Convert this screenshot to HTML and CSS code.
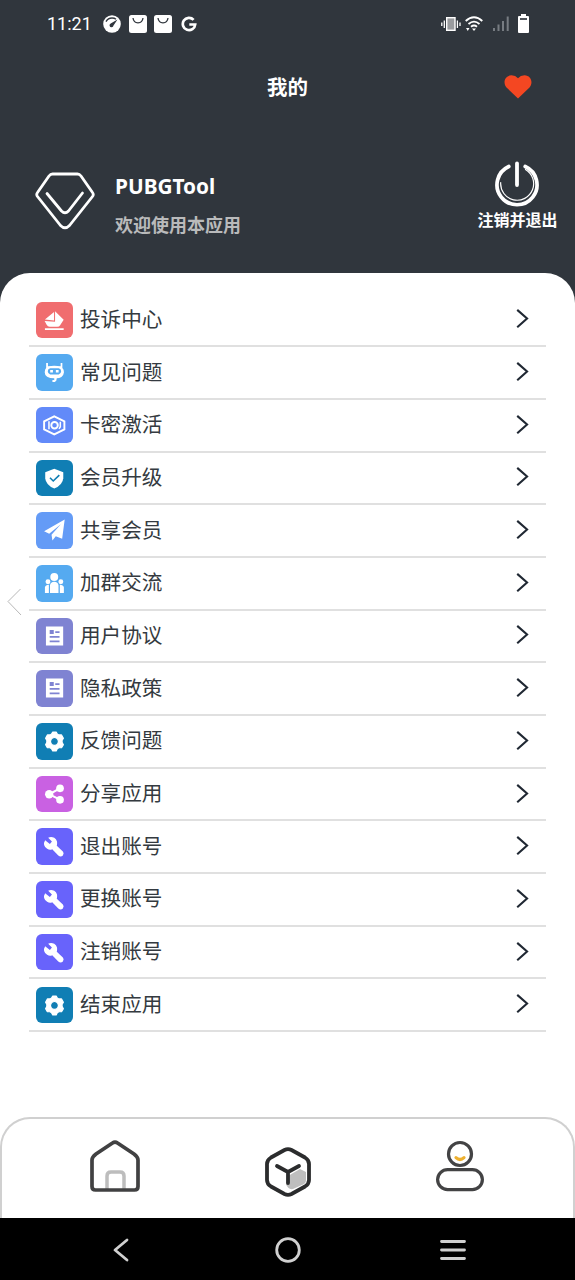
FILE: index.html
```html
<!DOCTYPE html>
<html lang="zh-CN">
<head>
<meta charset="utf-8">
<title>我的</title>
<link rel="stylesheet" href="styles.css">
</head>
<body>
<svg class="defs" width="0" height="0">
  <symbol id="boat" viewBox="0 0 36 36"><path fill="#fff" d="M18.800 9L27.300 17.500L23.800 23Q23 24.500 21 24.500H13.500Q11.500 24.500 10.500 22.500L8.500 18.700L18.800 19.500zM8.800 17.200L17.800 9.800V18.200zM8.800 26h18.500v1.700H8.800z"/></symbol>
  <symbol id="robot" viewBox="0 0 36 36"><path fill="#fff" fill-rule="evenodd" d="M10 8.800h1.800v3.400Q18 10.800 24.300 12.200V8.800H26v4.900q1.600 1.200 1.600 4.300q-.4 3.400-2.500 4.700Q23 24 20.500 24L20 26.500L18.500 27.500h-2.300v-1.900h1.800V24Q13.500 24 11 22.500Q8.600 21 8.600 18Q8.600 15 10 13.700zM14 14a3.200 3.200 0 0 0 0 6.200h8.400a3.200 3.200 0 0 0 0-6.200z"/><path d="M14 15.900h2.700v2.400H14zM19.600 15.900h2.700v2.400h-2.700z" fill="#fff"/></symbol>
  <symbol id="card" viewBox="0 0 36 36"><g fill="none" stroke="#fff"><path d="M8 14.200L18 9.200L28 14.200V22L18 27L8 22z" stroke-width="1.900"/><path d="M12.800 14v8M24 14.500v5l-1.300 2" stroke-width="1.500"/><circle cx="18.300" cy="18" r="3.200" stroke-width="1.900"/></g></symbol>
  <symbol id="shield" viewBox="0 0 36 36"><path fill="#fff" d="M18 8.700L26.900 12v6q-.5 6.500-8.900 10.200Q9.600 24.500 9.100 18v-6z"/><path class="cut" d="M13.800 17.500l3.200 3.200l6-5.700"/></symbol>
  <symbol id="plane" viewBox="0 0 36 36"><path fill="#fff" d="M28.300 7.500L25.800 26.500L19.500 24L16.200 28L15.300 22.500L24.500 12L13 21.500L8 19z"/></symbol>
  <symbol id="group" viewBox="0 0 36 36"><g fill="#fff"><circle cx="18" cy="11.800" r="3.900"/><circle cx="11.800" cy="16.500" r="2.400"/><circle cx="24.500" cy="16.500" r="2.400"/><path d="M13.800 27.500V20q.5-3.500 4.200-3.500t4.200 3.500v7.500zM8.800 27.500V22q.5-2.500 3.900-2.500v8zM27.500 27.500V22q-.5-2.500-4-2.500v8z"/></g></symbol>
  <symbol id="doc" viewBox="0 0 36 36"><path fill="#fff" fill-rule="evenodd" d="M9.800 8.500h17v18.500h-17zM13.500 11.900v3.800h4v-3.800zM19 13v1.700h4.200V13zM13.500 17.800v1.700h9.700v-1.700zM13.500 22.200V24h9.700v-1.800z"/></symbol>
  <symbol id="gear" viewBox="0 0 36 36"><path fill="#fff" stroke="#fff" stroke-width="1.200" stroke-linejoin="round" fill-rule="evenodd" d="M15.300 11L16.500 8.900h3.400L21 11l1.500.8h2.700l1.800 3.200l-1.300 2.300v1.800l1.300 2.300l-1.800 3h-2.700l-1.500 1l-1.100 2.100h-3.400l-1.200-2.100l-1.500-1h-2.600l-1.700-3l1.200-2.300v-1.800L9.500 15l1.700-3.200h2.600zM18.200 14.300a3.900 3.900 0 1 0 .01 0z"/></symbol>
  <symbol id="share" viewBox="0 0 36 36"><path d="M24 12L13 18L24 23.500" fill="none" stroke="#fff" stroke-width="2"/><g fill="#fff"><circle cx="13" cy="18" r="4.100"/><circle cx="23.700" cy="12.200" r="3.800"/><circle cx="23.700" cy="23.500" r="3.800"/></g></symbol>
  <symbol id="wrench" viewBox="0 0 36 36"><path fill="#fff" d="M12 9.500l3.700 3.900l-2 2.400L9 12Q6 17 11 20.500Q13.500 22.200 16 21L22 27.200Q24.500 29 26.500 27Q28 25 26.500 23.300L20.500 17.500Q22 12.500 18 9.700Q15 8 12 9.500z"/></symbol>
  <symbol id="chevron" viewBox="0 0 14 22"><path d="M2 2L12.300 11L2 20.200" fill="none" stroke="#202833" stroke-width="2.200"/></symbol>
  <symbol id="bag" viewBox="0 0 18 18"><rect width="18" height="18" rx="2.500" fill="#fff"/><path d="M4 3q.6 4.800 5 4.800t5-4.800" fill="none" stroke="#30363d" stroke-width="1.300"/></symbol>
</svg>
<div class="screen">
  <header class="top">
    <div class="status">
      <span class="clock">11:21</span>
      <svg class="gauge" width="18" height="18" viewBox="0 0 18 18"><circle cx="9" cy="9" r="8.800" fill="#fff"/><path d="M3 6.700Q5 3 9 3q2.500 0 4 1.200" fill="none" stroke="#30363d" stroke-width="1.400"/><path d="M14.500 4.500L10.500 10.500A2 2 0 1 1 7.700 8.500z" fill="#30363d"/></svg>
      <svg class="bag" width="18" height="18"><use href="#bag"/></svg>
      <svg class="bag" width="18" height="18"><use href="#bag"/></svg>
      <svg class="g-mark" width="16" height="16" viewBox="0 0 16 16"><path d="M12.600 3.800A6.200 6.200 0 1 0 14.200 8.500H8.300" fill="none" stroke="#fff" stroke-width="2.700"/></svg>
      <div class="signals">
        <svg width="20" height="16" viewBox="0 0 20 16"><rect x="5.700" y="1.700" width="8.300" height="12.600" fill="#999b9e" stroke="#fff" stroke-width="1.400"/><path d="M3.300 4.500v7.500M.8 6.500v3.500M16.400 4.500v7.500M19 6.500v3.500" stroke="#fff" stroke-width="1.300"/></svg>
        <svg class="wifi" width="18" height="16" viewBox="0 0 18 16"><g fill="none" stroke="#fff" stroke-width="1.800"><path d="M.7 5Q9-2.500 17.300 5M3.500 8Q9 3.200 14.500 8M6 10.800q3-2.500 6 0"/></g><path d="M1 12h3.500l-1.700 3zM7 12.500h4l-2 2.500z" fill="#fff"/></svg>
        <svg class="cell" width="18" height="16" viewBox="0 0 18 16"><path d="M2 12v3M6.500 8.500V15M11 5v10M15.700.5V15" stroke="#777c82" stroke-width="2"/></svg>
        <svg class="battery" width="11" height="19" viewBox="0 0 11 19"><path d="M3 0h5v2h2q1 0 1 1v15q0 1-1 1H1q-1 0-1-1V3q0-1 1-1h2z" fill="#fff"/><path d="M2 5h7" stroke="#30363d" stroke-width="1.700"/></svg>
      </div>
    </div>
    <div class="titlebar">
      <h1>我的</h1>
      <svg class="heart" width="28" height="24" viewBox="0 0 28 24"><path d="M14 23.500L2.500 12.500C-1.500 8 .8.500 7.500.3Q11.500.3 14 3.200Q16.500.3 20.500.3C27.200.5 29.500 8 25.500 12.500z" fill="#f44722"/></svg>
    </div>
    <div class="profile">
      <svg class="gem" width="60" height="58" viewBox="0 0 60 58"><g fill="none" stroke="#fff" stroke-width="2.800" stroke-linecap="round" stroke-linejoin="round"><path d="M17.500 2H42.500Q44.500 2 46 4L57.500 20.500Q59 22.500 57.500 24.500L34.500 53.500Q30 58 25.500 53.500L2.500 24.500Q1 22.500 2.500 20.500L14 4Q15.500 2 17.500 2z"/><path d="M12 21.500L26.500 39Q30 42.500 33.500 39L47.500 21"/></g></svg>
      <div class="who">
        <div class="name">PUBGTool</div>
        <div class="welcome">欢迎使用本应用</div>
      </div>
      <div class="logout">
        <svg width="46" height="46" viewBox="0 0 46 46"><g fill="none" stroke="#fff" stroke-linecap="round"><path d="M14.800 5.500A20 20 0 1 0 31.200 5.500" stroke-width="3.700"/><path d="M23 2.500V24" stroke-width="3.800"/><path d="M31.500 8.500A16.500 16.500 0 1 1 6.700 21.500" stroke-width="1.200"/></g></svg>
        <span>注销并退出</span>
      </div>
    </div>
  </header>
  <main class="panel">
    <ul class="menu">
      <li><svg class="tile red"><use href="#boat"/></svg><span>投诉中心</span><svg class="go"><use href="#chevron"/></svg></li>
      <li><svg class="tile sky"><use href="#robot"/></svg><span>常见问题</span><svg class="go"><use href="#chevron"/></svg></li>
      <li><svg class="tile blue"><use href="#card"/></svg><span>卡密激活</span><svg class="go"><use href="#chevron"/></svg></li>
      <li><svg class="tile teal"><use href="#shield"/></svg><span>会员升级</span><svg class="go"><use href="#chevron"/></svg></li>
      <li><svg class="tile azure"><use href="#plane"/></svg><span>共享会员</span><svg class="go"><use href="#chevron"/></svg></li>
      <li><svg class="tile sky"><use href="#group"/></svg><span>加群交流</span><svg class="go"><use href="#chevron"/></svg></li>
      <li><svg class="tile lilac"><use href="#doc"/></svg><span>用户协议</span><svg class="go"><use href="#chevron"/></svg></li>
      <li><svg class="tile lilac"><use href="#doc"/></svg><span>隐私政策</span><svg class="go"><use href="#chevron"/></svg></li>
      <li><svg class="tile teal"><use href="#gear"/></svg><span>反馈问题</span><svg class="go"><use href="#chevron"/></svg></li>
      <li><svg class="tile pink"><use href="#share"/></svg><span>分享应用</span><svg class="go"><use href="#chevron"/></svg></li>
      <li><svg class="tile violet"><use href="#wrench"/></svg><span>退出账号</span><svg class="go"><use href="#chevron"/></svg></li>
      <li><svg class="tile violet"><use href="#wrench"/></svg><span>更换账号</span><svg class="go"><use href="#chevron"/></svg></li>
      <li><svg class="tile violet"><use href="#wrench"/></svg><span>注销账号</span><svg class="go"><use href="#chevron"/></svg></li>
      <li><svg class="tile teal"><use href="#gear"/></svg><span>结束应用</span><svg class="go"><use href="#chevron"/></svg></li>
    </ul>
  </main>
  <nav class="tabs">
    <svg width="50" height="52" viewBox="0 0 50 52"><path d="M17 50V36q0-4 4-4h9q4 0 4 4v14" fill="none" stroke="#bdbdbd" stroke-width="3.500"/><path d="M22.500 3Q25 1.200 27.500 3L44 14Q48 17 48 20V46.500Q48 50 44.500 50H5.500Q2 50 2 46.500V20Q2 17 6 14z" fill="none" stroke="#414142" stroke-width="3.700"/></svg>
    <svg class="cube" width="46" height="50" viewBox="0 0 46 50"><path d="M23 29L35 22L41 25V33Q41 36 38 37.500L28 42Q23 43 21 37z" fill="#bebebe"/><path d="M19.500 3Q23 1.200 26.500 3L40 10.500Q44 13 44 17V33Q44 37 40 39.500L26.500 47Q23 48.800 19.500 47L6 39.500Q2 37 2 33V17Q2 13 6 10.500z" fill="none" stroke="#2b2c2d" stroke-width="3.800"/><path d="M12 19L23 25L34 19M23 25V36" fill="none" stroke="#2b2c2d" stroke-width="3.800" stroke-linecap="round"/></svg>
    <svg width="48" height="52" viewBox="0 0 48 52"><g fill="none" stroke="#434344" stroke-width="3.200"><circle cx="24" cy="14" r="11.500"/><rect x="1.600" y="29.600" width="44.800" height="20" rx="10"/></g><path d="M20 17.700q4 3.700 8 0" fill="none" stroke="#edb02f" stroke-width="3.200" stroke-linecap="round"/></svg>
  </nav>
  <footer class="keys">
    <svg width="16" height="24" viewBox="0 0 16 24"><path d="M14 2L2 12L14 22" fill="none" stroke="#d0d0d0" stroke-width="2.800" stroke-linecap="round" stroke-linejoin="round"/></svg>
    <svg class="home-key" width="26" height="26" viewBox="0 0 26 26"><circle cx="13" cy="13" r="11.300" fill="none" stroke="#d0d0d0" stroke-width="2.800"/></svg>
    <svg width="26" height="22" viewBox="0 0 26 22"><path d="M1.500 2.500h23M1.500 11h23M1.500 19.500h23" stroke="#d0d0d0" stroke-width="2.800" stroke-linecap="round"/></svg>
  </footer>
  <svg class="edge-back" width="15" height="28" viewBox="0 0 15 28"><path d="M13.500 1L1 13.500L14 27" fill="none" stroke="#b8b8b8" stroke-width="1"/></svg>
</div>
</body>
</html>
```
FILE: styles.css
```css
* { box-sizing: border-box; }
body { margin: 0; font-family: "Noto Sans CJK SC", sans-serif; }
svg { display: block; flex: none; }
.defs { position: absolute; }
.screen { position: relative; width: 575px; height: 1280px; display: flex; flex-direction: column; background: #30363d; overflow: hidden; }
.top { height: 272.500px; flex: none; color: #fff; }
.status { height: 47px; display: flex; align-items: center; padding: 0 46px 0 47px; }
.clock { width: 55.500px; font: 400 18px/20px Roboto, sans-serif; }
.bag { margin-left: 8px; }
.bag + .bag { margin-left: 7.500px; }
.g-mark { margin-left: 9px; }
.signals { margin-left: auto; display: flex; align-items: center; }
.wifi { margin-left: 4px; }
.cell { margin-left: 9px; }
.battery { margin-left: 8px; }
.titlebar { height: 80px; display: grid; grid-template-columns: 1fr auto 1fr; align-items: center; padding: 0 43px; }
h1 { grid-column: 2; margin: 0; padding-bottom: 2px; font-size: 20.500px; line-height: 28px; font-weight: 700; }
.heart { justify-self: end; }
.profile { display: flex; align-items: flex-start; padding: 33px 17.500px 0 35px; }
.gem { margin-top: 12px; }
.who { margin-left: 20px; padding-top: 9.500px; }
.name { font: 700 20.800px/32px "Noto Sans", sans-serif; }
.welcome { margin-top: 9.500px; font-size: 18px; line-height: 26px; font-weight: 700; color: #b9babb; }
.logout { margin-left: auto; padding-top: 1px; display: flex; flex-direction: column; align-items: center; font-size: 16px; line-height: 24px; font-weight: 700; }
.panel { flex: 1; background: #fff; border-radius: 30px 30px 0 0; padding: 22px 29px 0; }
.menu { list-style: none; margin: 0; padding: 0; }
.menu li { height: 52.700px; display: flex; align-items: center; padding: 0 17px 0 7px; border-bottom: 2px solid #e0e0e0; color: #343a40; font-size: 20.600px; }
.menu li span { margin-left: 7.500px; line-height: 30px; padding-bottom: 4px; }
.tile { width: 36.500px; height: 36.500px; border-radius: 6px; }
.go { width: 14px; height: 21px; margin-left: auto; margin-bottom: 2px; }
.red { background: #f06d6f; }
.sky { background: #55aaf0; }
.blue { background: #628af9; }
.teal { background: #107eb4; }
.azure { background: #649bf6; }
.lilac { background: #7f83d2; }
.pink { background: #c961e2; }
.violet { background: #6863fb; }
.cut { fill: none; stroke: #107eb4; stroke-width: 1.600; }
.tabs { height: 101px; flex: none; display: flex; justify-content: space-between; padding: 20.500px 89px 0 88px; background: #fff; border: 2px solid #d0d0d0; border-bottom: 0; border-radius: 30px 30px 0 0; box-shadow: 0 -35px 0 35px #fff; clip-path: inset(-1px 0 0 0); }
.cube { margin-top: 7px; }
.keys { height: 62px; flex: none; z-index: 1; display: flex; align-items: center; justify-content: space-between; padding: 1px 109px 0 113px; background: #000; }
.home-key { margin-left: 6px; }
.edge-back { position: absolute; left: 7px; top: 588px; }
```
